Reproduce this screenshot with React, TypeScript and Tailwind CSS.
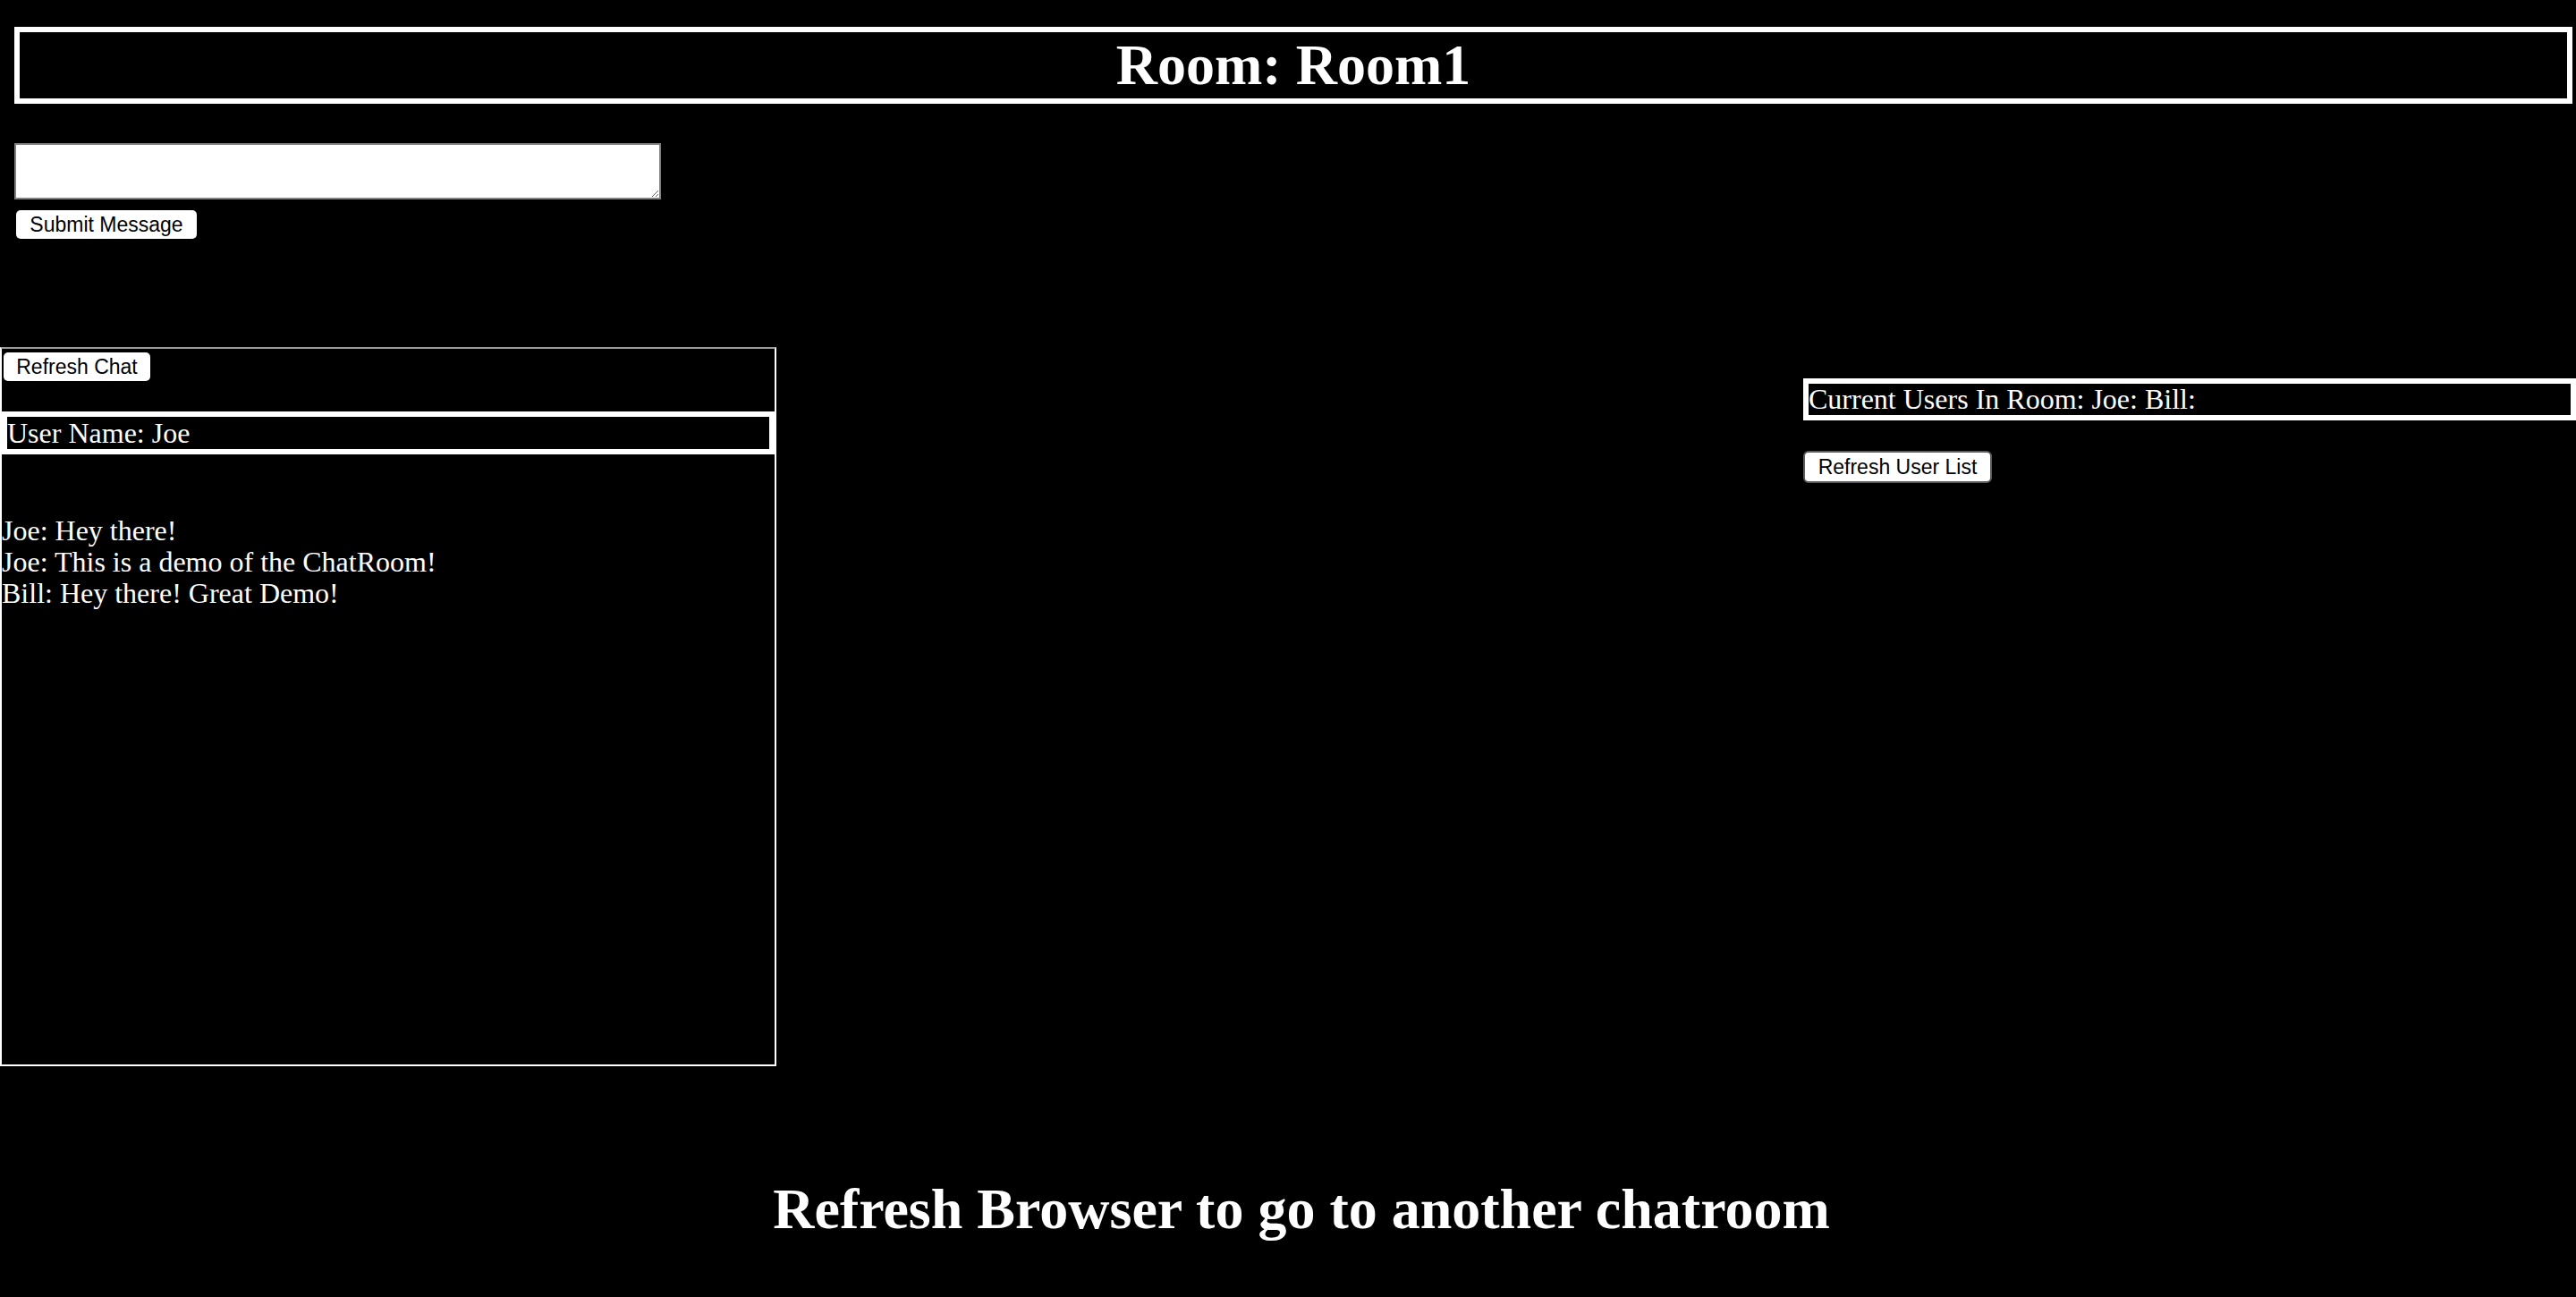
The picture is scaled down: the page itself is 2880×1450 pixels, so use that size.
import React from 'react';

const serif = "font-['Liberation_Serif','Times_New_Roman',serif]";
const sans = "font-['Liberation_Sans',Arial,sans-serif]";

const messages = [
  'Joe: Hey there!',
  'Joe: This is a demo of the ChatRoom!',
  'Bill: Hey there! Great Demo!',
];

export default function App() {
  return (
    <div className={`min-h-[1450px] w-full bg-black pt-[30px] text-white ${serif}`}>
      {/* Room title */}
      <h1 className="ml-[16px] mr-[4px] border-[6px] border-white text-center text-[64px] font-bold leading-[74px]">
        Room: Room1
      </h1>

      {/* Message form */}
      <div className="ml-[16px] mt-[44px] flex flex-col items-start">
        <textarea className="block h-[63px] w-[723px] border-2 border-[#808080] bg-white text-black" />
        <button
          className={`ml-[2px] mt-[12px] h-[32px] w-[202px] rounded-[5px] bg-white text-[23px] leading-none text-black ${sans}`}
        >
          Submit Message
        </button>
      </div>

      {/* Chat + users */}
      <div className="mt-[121px] flex items-start justify-between">
        <div className="h-[804px] w-[868px] border-2 border-white border-t-[#9a9a9a]">
          <button
            className={`ml-[2px] mt-[4px] block h-[32px] w-[164px] rounded-[5px] bg-white text-[23px] leading-none text-black ${sans}`}
          >
            Refresh Chat
          </button>
          <div className="mt-[34px] border-[6px] border-white text-[32px] leading-[36px]">User Name: Joe</div>
          <div className="mt-[68px] text-[32px] leading-[35px]">
            {messages.map((m, i) => (
              <div key={i}>{m}</div>
            ))}
          </div>
        </div>

        <div className="mt-[35px] w-[864px]">
          <div className="border-[6px] border-white text-[32px] leading-[35px]">
            Current Users In Room: Joe: Bill:
          </div>
          <button
            className={`mt-[34px] block h-[36px] w-[211px] rounded-[6px] border-2 border-[#5c5c5c] bg-white text-[23px] leading-none text-black ${sans}`}
          >
            Refresh User List
          </button>
        </div>
      </div>

      <h1 className="mt-[124px] pl-[30px] text-center text-[64px] font-bold leading-[71px]">
        Refresh Browser to go to another chatroom
      </h1>
    </div>
  );
}
